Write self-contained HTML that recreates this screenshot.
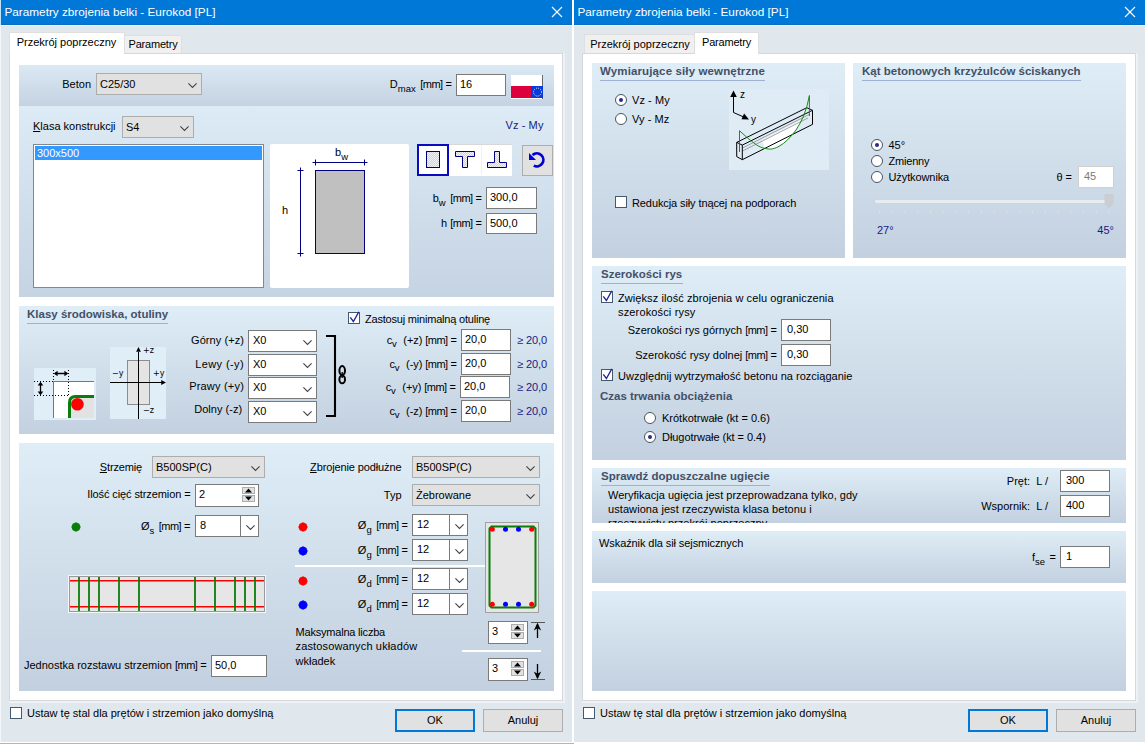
<!DOCTYPE html><html><head><meta charset="utf-8"><title>Parametry zbrojenia belki - Eurokod [PL]</title><style>
html,body{margin:0;padding:0;background:#fff}
body{width:1145px;height:744px;position:relative;overflow:hidden;font:11px "Liberation Sans",sans-serif;color:#000}
.dlg{position:absolute;top:0;width:572px;height:742px;background:#e1e8ed;overflow:hidden}
.a,.dlg *{position:absolute;box-sizing:border-box}
.tb{left:0;top:0;width:572px;height:25px;background:#0078d7}
.tt{left:4.5px;top:4px;color:#fff;font-size:11.75px;line-height:16px;white-space:nowrap}
.page{left:9px;top:53px;width:554px;height:648px;background:#fff;border:1px solid #d4d8dc;box-shadow:1px 1px 0 1px #eef2f5}
.tab{white-space:nowrap;text-align:center;border:1px solid #dfdfdf;border-bottom:none;line-height:14px}
.tab.on{background:#fff;z-index:3}
.tab.off{background:#f0f0f0;z-index:1}
.pn{background:linear-gradient(#deedf6,#c3d0e0)}
.l{white-space:nowrap;line-height:14px;height:14px}
.r{text-align:right}
.h{white-space:nowrap;line-height:14px;height:14px;font-weight:bold;font-size:11.5px;color:#435068}
.hl{height:1px;background:#9fb1d2}
.in{background:#fff;border:1px solid #7a7a7a;line-height:19px;padding-left:3px;white-space:nowrap}
.cb{background:#e1e1e1;border:1px solid #adadad;line-height:21px;padding-left:3px;white-space:nowrap}
.cw{background:#fff;border:1px solid #7a7a7a;line-height:18.500px;padding-left:4px;white-space:nowrap}
.chk{width:12px;height:12px;background:#fff;border:1px solid #44586e}
.rad{width:12px;height:12px;border-radius:50%;background:#fff;border:1px solid #4a5462}
.btn{background:#e1e1e1;border:1px solid #adadad;text-align:center;line-height:20px}
.nv{color:#1a1a80}
svg{overflow:visible}
u,sub{position:static!important}
sub{font-size:9.500px;vertical-align:-3.500px;line-height:0;margin-right:1.500px}
.mm{position:static!important;letter-spacing:-0.550px}
</style></head><body>
<div class="dlg" style="left:0px">
<div class="tb"></div><div class="tt">Parametry zbrojenia belki - Eurokod [PL]</div>
<div style="left:0;top:24px;width:572px;height:1px;background:#0a6fc4"></div><div style="left:0;top:25px;width:572px;height:1px;background:#e9f4fb"></div>
<div style="left:0;top:0;width:1px;height:742px;background:#f3f7fa;z-index:5"></div>
<div style="left:0;top:0;width:1px;height:25px;background:#bfe3fb;z-index:6"></div>
<svg style="left:552px;top:7px" width="10" height="10" viewBox="0 0 10 10"><path d="M0 0 L10 10 M10 0 L0 10" stroke="#fff" stroke-width="1.1"/></svg>
<div class="page"></div>
<div class="tab on" style="left:9px;top:32px;width:116px;height:22px;padding-top:2px;text-indent:-1px">Przekrój poprzeczny</div>
<div class="tab off" style="left:124px;top:34.500px;width:58px;height:18.500px;padding-top:1px;letter-spacing:-0.2px">Parametry</div>
<div class="pn" style="left:19px;top:65px;width:535px;height:41px;background:linear-gradient(#dbe9f4,#c4d2e2);"></div>
<div class="pn" style="left:19px;top:106px;width:535px;height:191px;background:linear-gradient(#dcebf5,#c5d3e3);"></div>
<div class="pn" style="left:19px;top:306px;width:535px;height:128px;"></div>
<div class="pn" style="left:19px;top:443px;width:535px;height:248px;"></div>
<div class="l r" style="right:481px;top:77px;">Beton</div>
<div class="cb" style="left:96px;top:73px;width:106px;height:22px">C25/30</div>
<svg style="left:188.0px;top:82.5px" width="9" height="5" viewBox="0 0 9 5"><path d="M0.4 0.4 L4.5 4.5 L8.6 0.4" fill="none" stroke="#444" stroke-width="1.1"/></svg>
<div class="l r" style="right:120px;top:77px;">D<sub>max</sub> <span class="mm">[mm]</span> =</div>
<div class="in" style="left:456px;top:74px;width:50px;height:22px;">16</div>
<div style="left:511px;top:75px;width:32px;height:23.500px;background:#fff;border-right:1px solid #666"></div>
<div style="left:511px;top:86.300px;width:32px;height:12.200px;background:#dc003c"></div>
<div style="left:531px;top:86.300px;width:12px;height:12.200px;background:#0a3ad8"></div>
<svg style="left:531px;top:86.300px" width="12" height="12" viewBox="0 0 12 12"><circle cx="6.500" cy="6.100" r="4" fill="none" stroke="#e8f0ff" stroke-width="1" stroke-dasharray="1 1.1"/></svg>
<div class="l" style="left:33px;top:119px;"><u>K</u>lasa konstrukcji</div>
<div class="cb" style="left:122px;top:116px;width:72px;height:22px">S4</div>
<svg style="left:180.0px;top:125.5px" width="9" height="5" viewBox="0 0 9 5"><path d="M0.4 0.4 L4.5 4.5 L8.6 0.4" fill="none" stroke="#444" stroke-width="1.1"/></svg>
<div class="l nv" style="left:505.5px;top:118px;letter-spacing:0.1px">Vz - My</div>
<div style="left:33px;top:144px;width:231px;height:144px;background:#fff;border:1px solid #828790"></div>
<div style="left:35px;top:146px;width:227px;height:14px;background:#3399ff;color:#fff;line-height:14px;padding-left:2px">300x500</div>
<div style="left:270px;top:144px;width:139px;height:144px;background:#fff;border-radius:2px"></div>
<svg style="left:270px;top:144px" width="139" height="144" viewBox="270 144 139 144">
<rect x="315.5" y="170.5" width="49" height="83" fill="#c0c0c0" stroke="#000080" stroke-width="1"/>
<path d="M312.5 162.5 H367.5 M315.5 159.5 V165.5 M364.5 159.5 V165.5 M300.5 167.5 V256.5 M297.5 170.5 H303.5 M297.5 253.5 H303.5" stroke="#000080" stroke-width="1" fill="none"/>
</svg>
<div class="l" style="left:335px;top:145px;">b<sub>w</sub></div>
<div class="l" style="left:282px;top:203px;">h</div>
<div style="left:417px;top:144px;width:95px;height:32px;background:#fff"></div>
<div style="left:417px;top:144px;width:32px;height:32px;border:2.500px solid #0a0ac0"></div>
<svg style="left:417px;top:144px" width="95" height="32" viewBox="0 0 95 32">
<defs><pattern id="dp" width="2" height="2" patternUnits="userSpaceOnUse"><rect width="2" height="2" fill="#f4f4f8"/><rect width="1" height="1" fill="#d0d0d8"/><rect x="1" y="1" width="1" height="1" fill="#d0d0d8"/></pattern></defs>
<rect x="9.500" y="7.500" width="13" height="16" fill="url(#dp)" stroke="#000080" stroke-width="1"/>
<path d="M38.500 7.500 H57.500 V12.500 H50.500 V23.500 H45.500 V12.500 H38.500 Z" fill="url(#dp)" stroke="#000080" stroke-width="1"/>
<path d="M70.500 23.500 H89.500 V18.500 H82.500 V7.500 H77.500 V18.500 H70.500 Z" fill="url(#dp)" stroke="#000080" stroke-width="1"/>
<path d="M32 0.500 H95" stroke="#d8d8d8" stroke-width="1" fill="none"/><path d="M64.500 1 V31" stroke="#f1f1f1" stroke-width="1" fill="none"/>
</svg>
<div class="btn" style="left:522px;top:145px;width:31px;height:31px"></div>
<svg style="left:522px;top:145px" width="32" height="31" viewBox="0 0 32 31">
<path d="M10.50 10.07 A6.500 6.500 0 1 1 11.80 20.64" fill="none" stroke="#0000d2" stroke-width="2.700"/>
<path d="M7 8 V15 H14 Z" fill="#0000e0"/></svg>
<div class="l r" style="right:90px;top:191px;">b<sub>w</sub> <span class="mm">[mm]</span> =</div>
<div class="in" style="left:486px;top:187px;width:51px;height:22px;">300,0</div>
<div class="l r" style="right:90px;top:216px;">h <span class="mm">[mm]</span> =</div>
<div class="in" style="left:486px;top:213px;width:51px;height:21px;">500,0</div>
<div class="h" style="left:27px;top:307px">Klasy środowiska, otuliny</div>
<div class="hl" style="left:27px;top:323px;width:141px"></div>
<div class="l r" style="right:328px;top:333.2px;letter-spacing:0.07px">Górny (+z)</div>
<div class="cw" style="left:248px;top:330px;width:69px;height:22px">X0</div>
<svg style="left:303.0px;top:339.5px" width="9" height="5" viewBox="0 0 9 5"><path d="M0.4 0.4 L4.5 4.5 L8.6 0.4" fill="none" stroke="#444" stroke-width="1.1"/></svg>
<div class="l r" style="right:328px;top:356.5px;letter-spacing:0.4px">Lewy (-y)</div>
<div class="cw" style="left:248px;top:353.5px;width:69px;height:22px">X0</div>
<svg style="left:303.0px;top:363.0px" width="9" height="5" viewBox="0 0 9 5"><path d="M0.4 0.4 L4.5 4.5 L8.6 0.4" fill="none" stroke="#444" stroke-width="1.1"/></svg>
<div class="l r" style="right:328px;top:379px;letter-spacing:0.2px">Prawy (+y)</div>
<div class="cw" style="left:248px;top:377px;width:69px;height:22px">X0</div>
<svg style="left:303.0px;top:386.5px" width="9" height="5" viewBox="0 0 9 5"><path d="M0.4 0.4 L4.5 4.5 L8.6 0.4" fill="none" stroke="#444" stroke-width="1.1"/></svg>
<div class="l r" style="right:329.8px;top:402.2px;letter-spacing:0.03px">Dolny (-z)</div>
<div class="cw" style="left:248px;top:401px;width:69px;height:22px">X0</div>
<svg style="left:303.0px;top:410.5px" width="9" height="5" viewBox="0 0 9 5"><path d="M0.4 0.4 L4.5 4.5 L8.6 0.4" fill="none" stroke="#444" stroke-width="1.1"/></svg>
<div class="chk" style="left:348px;top:312px"></div>
<svg style="left:348px;top:310px" width="14" height="15" viewBox="0 0 14 15"><path d="M2.300 7.300 L5.400 11.500 L10.800 1.800" fill="none" stroke="#26269a" stroke-width="1.35"/></svg>
<div class="l" style="left:365px;top:312px;letter-spacing:-0.2px">Zastosuj minimalną otulinę</div>
<div class="l r" style="right:115px;top:332.5px;letter-spacing:-0.05px">c<sub style="margin-right:3.500px">v</sub> (+z) <span class="mm">[mm]</span> =</div>
<div class="in" style="left:461px;top:329px;width:50px;height:22px;">20,0</div>
<div class="l nv" style="left:517px;top:332.5px;letter-spacing:-0.1px">≥ 20,0</div>
<div class="l r" style="right:115px;top:356.5px;letter-spacing:-0.05px">c<sub style="margin-right:3.500px">v</sub> (-y) <span class="mm">[mm]</span> =</div>
<div class="in" style="left:461px;top:353px;width:50px;height:22px;">20,0</div>
<div class="l nv" style="left:517px;top:356.5px;letter-spacing:-0.1px">≥ 20,0</div>
<div class="l r" style="right:116px;top:379.5px;letter-spacing:-0.05px">c<sub style="margin-right:3.500px">v</sub> (+y) <span class="mm">[mm]</span> =</div>
<div class="in" style="left:460px;top:376px;width:50px;height:22px;">20,0</div>
<div class="l nv" style="left:517px;top:379.5px;letter-spacing:-0.1px">≥ 20,0</div>
<div class="l r" style="right:115px;top:403.5px;letter-spacing:-0.05px">c<sub style="margin-right:3.500px">v</sub> (-z) <span class="mm">[mm]</span> =</div>
<div class="in" style="left:461px;top:400px;width:50px;height:22px;">20,0</div>
<div class="l nv" style="left:517px;top:403.5px;letter-spacing:-0.1px">≥ 20,0</div>
<svg style="left:326px;top:335px" width="22" height="82" viewBox="326 335 22 82"><path d="M326 336 H335 V416 H326" fill="none" stroke="#000" stroke-width="2.100"/><ellipse cx="342.200" cy="370.600" rx="2.800" ry="4.500" fill="none" stroke="#000" stroke-width="2"/><ellipse cx="342.200" cy="379.400" rx="2.800" ry="3.900" fill="none" stroke="#000" stroke-width="2"/><path d="M342.200 372 V378" stroke="#000" stroke-width="1.300"/></svg>
<svg style="left:34px;top:368px" width="62" height="52" viewBox="34 368 62 52">
<rect x="34" y="368" width="62" height="52" fill="#e0eef8"/>
<rect x="53.500" y="381.500" width="40.500" height="36.500" fill="#fff"/>
<rect x="70" y="397" width="24" height="21" fill="#e2e2e2"/>
<path d="M53.500 418 V381.500 H94" fill="none" stroke="#777" stroke-width="1"/>
<path d="M69.500 418 V402.500 Q69.500 396.500 75.500 396.500 H94" fill="none" stroke="#0a7d0a" stroke-width="3"/>
<circle cx="77.400" cy="404.300" r="6.300" fill="#ff0000"/>
<path d="M34 381.500 H54 M34 395.500 H69 M53.500 370 V381 M68.500 370 V396" stroke="#000" stroke-width="1" stroke-dasharray="1 2" fill="none"/>
<path d="M55 373.500 H67 M40.500 383 V394" stroke="#000" stroke-width="1.300"/>
<path d="M53.800 373.500 l3.800 -2.800 v5.600z M68.200 373.500 l-3.800 -2.800 v5.600z M40.500 381.800 l-2.800 3.800 h5.600z M40.500 395.200 l-2.800 -3.800 h5.600z" fill="#000"/>
</svg>
<svg style="left:110px;top:347px" width="56" height="72" viewBox="110 347 56 72">
<rect x="110" y="347" width="56" height="72" fill="#e0eef8"/>
<rect x="127.500" y="360.500" width="22" height="44" fill="#e4e4e4" stroke="#8c8c8c"/>
<path d="M138.500 352 V419 M110 382.500 H163" stroke="#000" stroke-width="1"/>
<path d="M138.500 347 l-2.400 4.800 h4.800z M166 382.500 l-4.800 -2.400 v4.800z" fill="#000"/>
</svg>
<div class="l" style="left:143px;top:343.5px;font:8px/14px DejaVu Sans,sans-serif">+z</div>
<div class="l" style="left:112px;top:366.5px;font:8px/14px DejaVu Sans,sans-serif">−y</div>
<div class="l" style="left:153px;top:366.5px;font:8px/14px DejaVu Sans,sans-serif">+y</div>
<div class="l" style="left:143px;top:404px;font:8px/14px DejaVu Sans,sans-serif">−z</div>
<div class="l r" style="right:430px;top:460px;letter-spacing:-0.15px"><u>S</u>trzemię</div>
<div class="cb" style="left:152px;top:456px;width:113px;height:22px">B500SP(C)</div>
<svg style="left:251.0px;top:465.5px" width="9" height="5" viewBox="0 0 9 5"><path d="M0.4 0.4 L4.5 4.5 L8.6 0.4" fill="none" stroke="#444" stroke-width="1.1"/></svg>
<div class="l r" style="right:381.5px;top:487px;letter-spacing:-0.1px">Ilość cięć strzemion =</div>
<div class="in" style="left:195px;top:484px;width:64px;height:23px;">2</div>
<div style="left:242px;top:487px;width:13px;height:7px;background:#e1e1e1;border:1px solid #adadad"></div>
<div style="left:242px;top:495px;width:13px;height:7px;background:#e1e1e1;border:1px solid #adadad"></div>
<svg style="left:242px;top:487px" width="13" height="15" viewBox="0 0 13 15"><path d="M3 5.5 L6.5 1.5 L10 5.5Z M3 9.5 L6.5 13.5 L10 9.5Z" fill="#000"/></svg>
<svg style="left:70.500px;top:521.700px" width="10" height="10"><path d="M5 0.300 L8.300 1.700 L9.700 5 L8.300 8.300 L5 9.700 L1.700 8.300 L0.300 5 L1.700 1.700Z" fill="#0a7d0a"/></svg>
<div class="l r" style="right:381.5px;top:519px;">Ø<sub>s</sub> <span class="mm">[mm]</span> =</div>
<div class="cw" style="left:195px;top:515px;width:64px;height:22px">8</div>
<div style="left:240px;top:516px;width:1px;height:20px;background:#7a7a7a"></div>
<svg style="left:245.5px;top:525.0px" width="9" height="5" viewBox="0 0 9 5"><path d="M0.4 0.4 L4.5 4.5 L8.6 0.4" fill="none" stroke="#444" stroke-width="1.1"/></svg>
<svg style="left:68px;top:575px" width="198" height="38" viewBox="68 575 198 38"><rect x="68.500" y="575.500" width="197" height="37" fill="#f4f8fb" stroke="#f4f8fb"/><rect x="69.500" y="576.500" width="195" height="35" fill="#e6e6e6" stroke="#9a9a9a"/><path d="M70 580.700 H264 M70 606.700 H264" stroke="#f00" stroke-width="1.6"/><path d="M79 577 V611" stroke="#0a7d0a" stroke-width="1.8"/><path d="M89 577 V611" stroke="#0a7d0a" stroke-width="1.8"/><path d="M99 577 V611" stroke="#0a7d0a" stroke-width="1.8"/><path d="M119 577 V611" stroke="#0a7d0a" stroke-width="1.8"/><path d="M139 577 V611" stroke="#0a7d0a" stroke-width="1.8"/><path d="M195 577 V611" stroke="#0a7d0a" stroke-width="1.8"/><path d="M215 577 V611" stroke="#0a7d0a" stroke-width="1.8"/><path d="M235 577 V611" stroke="#0a7d0a" stroke-width="1.8"/><path d="M245 577 V611" stroke="#0a7d0a" stroke-width="1.8"/><path d="M255 577 V611" stroke="#0a7d0a" stroke-width="1.8"/></svg>
<div class="l" style="left:24px;top:658px;">Jednostka rozstawu strzemion <span class="mm">[mm]</span> =</div>
<div class="in" style="left:211px;top:655px;width:56px;height:22px;">50,0</div>
<div class="l r" style="right:170.5px;top:460px;letter-spacing:-0.12px"><u>Z</u>brojenie podłużne</div>
<div class="cb" style="left:412px;top:456px;width:128px;height:22px">B500SP(C)</div>
<svg style="left:526.0px;top:465.5px" width="9" height="5" viewBox="0 0 9 5"><path d="M0.4 0.4 L4.5 4.5 L8.6 0.4" fill="none" stroke="#444" stroke-width="1.1"/></svg>
<div class="l r" style="right:170.5px;top:488px;">Typ</div>
<div class="cb" style="left:412px;top:484px;width:128px;height:22px">Żebrowane</div>
<svg style="left:526.0px;top:493.5px" width="9" height="5" viewBox="0 0 9 5"><path d="M0.4 0.4 L4.5 4.5 L8.6 0.4" fill="none" stroke="#444" stroke-width="1.1"/></svg>
<svg style="left:298px;top:521.7px" width="10" height="10"><path d="M5 0.300 L8.300 1.700 L9.700 5 L8.300 8.300 L5 9.700 L1.700 8.300 L0.300 5 L1.700 1.700Z" fill="#f00"/></svg>
<div class="l r" style="right:164px;top:518px;">Ø<sub>g</sub> <span class="mm">[mm]</span> =</div>
<div class="cw" style="left:412px;top:514px;width:56px;height:22px">12</div>
<div style="left:449px;top:515px;width:1px;height:20px;background:#7a7a7a"></div>
<svg style="left:454.5px;top:524.0px" width="9" height="5" viewBox="0 0 9 5"><path d="M0.4 0.4 L4.5 4.5 L8.6 0.4" fill="none" stroke="#444" stroke-width="1.1"/></svg>
<svg style="left:298px;top:546.2px" width="10" height="10"><path d="M5 0.300 L8.300 1.700 L9.700 5 L8.300 8.300 L5 9.700 L1.700 8.300 L0.300 5 L1.700 1.700Z" fill="#00f"/></svg>
<div class="l r" style="right:164px;top:543px;">Ø<sub>g</sub> <span class="mm">[mm]</span> =</div>
<div class="cw" style="left:412px;top:539px;width:56px;height:22px">12</div>
<div style="left:449px;top:540px;width:1px;height:20px;background:#7a7a7a"></div>
<svg style="left:454.5px;top:549.0px" width="9" height="5" viewBox="0 0 9 5"><path d="M0.4 0.4 L4.5 4.5 L8.6 0.4" fill="none" stroke="#444" stroke-width="1.1"/></svg>
<svg style="left:298px;top:575.5px" width="10" height="10"><path d="M5 0.300 L8.300 1.700 L9.700 5 L8.300 8.300 L5 9.700 L1.700 8.300 L0.300 5 L1.700 1.700Z" fill="#f00"/></svg>
<div class="l r" style="right:164px;top:572px;">Ø<sub>d</sub> <span class="mm">[mm]</span> =</div>
<div class="cw" style="left:412px;top:568px;width:56px;height:22px">12</div>
<div style="left:449px;top:569px;width:1px;height:20px;background:#7a7a7a"></div>
<svg style="left:454.5px;top:578.0px" width="9" height="5" viewBox="0 0 9 5"><path d="M0.4 0.4 L4.5 4.5 L8.6 0.4" fill="none" stroke="#444" stroke-width="1.1"/></svg>
<svg style="left:298px;top:600px" width="10" height="10"><path d="M5 0.300 L8.300 1.700 L9.700 5 L8.300 8.300 L5 9.700 L1.700 8.300 L0.300 5 L1.700 1.700Z" fill="#00f"/></svg>
<div class="l r" style="right:164px;top:597px;">Ø<sub>d</sub> <span class="mm">[mm]</span> =</div>
<div class="cw" style="left:412px;top:593px;width:56px;height:22px">12</div>
<div style="left:449px;top:594px;width:1px;height:20px;background:#7a7a7a"></div>
<svg style="left:454.5px;top:603.0px" width="9" height="5" viewBox="0 0 9 5"><path d="M0.4 0.4 L4.5 4.5 L8.6 0.4" fill="none" stroke="#444" stroke-width="1.1"/></svg>
<div style="left:295px;top:565px;width:190px;height:2px;background:#fff"></div>
<svg style="left:485px;top:522px" width="54" height="91" viewBox="485 522 54 91"><rect x="485.500" y="522.500" width="53" height="90" fill="#e6e6e6" stroke="#a0a0a0"/><path d="M491.500 526.500 H533.500 L535.500 528.500 V605.500 L533.500 607.500 H491.500 L489.500 605.500 V528.500 Z" fill="none" stroke="#0a7d0a" stroke-width="2"/><circle cx="492.3" cy="529.3" r="2.500" fill="#f00"/><circle cx="505.5" cy="529.3" r="2.500" fill="#00f"/><circle cx="518.5" cy="529.3" r="2.500" fill="#00f"/><circle cx="531.7" cy="529.3" r="2.500" fill="#f00"/><circle cx="492.3" cy="604.3" r="2.500" fill="#f00"/><circle cx="505.5" cy="604.3" r="2.500" fill="#00f"/><circle cx="518.5" cy="604.3" r="2.500" fill="#00f"/><circle cx="531.7" cy="604.3" r="2.500" fill="#f00"/></svg>
<div class="l" style="left:295.5px;top:625px;letter-spacing:-0.2px">Maksymalna liczba</div>
<div class="l" style="left:295.5px;top:639px;letter-spacing:0.15px">zastosowanych układów</div>
<div class="l" style="left:295.5px;top:653.5px;">wkładek</div>
<div class="in" style="left:488px;top:621px;width:40px;height:23px;">3</div>
<div style="left:511px;top:624px;width:13px;height:7px;background:#e1e1e1;border:1px solid #adadad"></div>
<div style="left:511px;top:632px;width:13px;height:7px;background:#e1e1e1;border:1px solid #adadad"></div>
<svg style="left:511px;top:624px" width="13" height="15" viewBox="0 0 13 15"><path d="M3 5.5 L6.5 1.5 L10 5.5Z M3 9.5 L6.5 13.5 L10 9.5Z" fill="#000"/></svg>
<div class="in" style="left:488px;top:658px;width:40px;height:23px;">3</div>
<div style="left:511px;top:661px;width:13px;height:7px;background:#e1e1e1;border:1px solid #adadad"></div>
<div style="left:511px;top:669px;width:13px;height:7px;background:#e1e1e1;border:1px solid #adadad"></div>
<svg style="left:511px;top:661px" width="13" height="15" viewBox="0 0 13 15"><path d="M3 5.5 L6.5 1.5 L10 5.5Z M3 9.5 L6.5 13.5 L10 9.5Z" fill="#000"/></svg>
<div style="left:462px;top:650px;width:79px;height:2px;background:#fff"></div>
<svg style="left:530px;top:620px" width="16" height="62" viewBox="530 620 16 62"><path d="M531 622.500 H545 M531 679.500 H545" stroke="#555" stroke-width="1" fill="none"/><path d="M537.500 624 V638 M537.500 664 V678" stroke="#000" stroke-width="1.300" fill="none"/><path d="M537.500 622.700 L533.800 630.500 L537.500 628.300 L541.200 630.500Z M537.500 679.300 L533.800 671.500 L537.500 673.700 L541.200 671.500Z" fill="#000"/></svg>
<div class="chk" style="left:10px;top:707px"></div>
<div class="l" style="left:27px;top:706px;">Ustaw tę stal dla prętów i strzemion jako domyślną</div>
<div class="btn" style="left:395px;top:709px;width:80px;height:23px;border:2px solid #0078d7;line-height:18px">OK</div>
<div class="btn" style="left:483px;top:709px;width:80px;height:23px">Anuluj</div>
</div>
<div class="dlg" style="left:573px">
<div class="tb"></div><div class="tt">Parametry zbrojenia belki - Eurokod [PL]</div>
<div style="left:0;top:24px;width:572px;height:1px;background:#0a6fc4"></div><div style="left:0;top:25px;width:572px;height:1px;background:#e9f4fb"></div>
<div style="left:0;top:0;width:1px;height:742px;background:#fff;z-index:5"></div>
<svg style="left:552px;top:7px" width="10" height="10" viewBox="0 0 10 10"><path d="M0 0 L10 10 M10 0 L0 10" stroke="#fff" stroke-width="1.1"/></svg>
<div class="page"></div>
<div class="tab off" style="left:11px;top:34px;width:112px;height:19px;padding-top:2px">Przekrój poprzeczny</div>
<div class="tab on" style="left:121px;top:32px;width:65px;height:22px;padding-top:2px;letter-spacing:-0.2px">Parametry</div>
<div class="pn" style="left:19px;top:63px;width:253px;height:195px;"></div>
<div class="pn" style="left:280px;top:63px;width:273px;height:195px;"></div>
<div class="pn" style="left:19px;top:266px;width:534px;height:194px;"></div>
<div class="pn" style="left:19px;top:468px;width:534px;height:55px;"></div>
<div class="pn" style="left:19px;top:531px;width:534px;height:52px;"></div>
<div class="pn" style="left:19px;top:591px;width:534px;height:100px;"></div>
<div class="h" style="left:27px;top:64px"><span style="position:static;letter-spacing:0.13px">Wymiarujące siły wewnętrzne</span></div>
<div class="hl" style="left:27px;top:80px;width:165px"></div>
<div class="rad" style="left:42px;top:94px"></div>
<div style="left:46px;top:98px;width:4px;height:4px;border-radius:50%;background:#2a2a8a"></div>
<div class="l" style="left:59px;top:93px;letter-spacing:0.07px">Vz - My</div>
<div class="rad" style="left:42px;top:113px"></div>
<div class="l" style="left:59px;top:112px;letter-spacing:0.07px">Vy - Mz</div>
<div class="chk" style="left:42px;top:196px"></div>
<div class="l" style="left:59px;top:195.5px;letter-spacing:-0.1px">Redukcja siły tnącej na podporach</div>
<svg style="left:156px;top:89px" width="100" height="81" viewBox="729 89 100 81">
<rect x="729" y="89" width="100" height="81" fill="#dfecf6"/>
<path d="M762 140 L801.500 120 L796 130 L787.500 139.900 L779 146.300 L770.500 149.100 L764.900 148.400 Z" fill="#fff"/>
<path d="M742.500 148 L810 114 M742.500 151 L808 118" stroke="#8a8a8a" stroke-width="0.800" fill="none"/>
<path d="M736.700 142.400 V156.600 L742.300 159.700 V145.100 Z M736.700 142.400 L806.800 107.700 L812.500 110.300 M742.300 145.100 L812.500 110.300 V124.400 L742.300 159.700" stroke="#000" stroke-width="1" fill="none"/>
<path d="M739.500 152 V130.700 L746.600 137.100 C750 140 753 142.500 756.400 144.800 C759 146.600 762 147.800 764.900 148.400 C767 148.900 769 149.200 770.500 149.100 C773 149 776 148 779 146.300 C782 144.600 785 142.500 787.500 139.900 C790.500 137 793.500 133.500 796 130 C798.500 126 801 122 803 117.300 C804.500 113.500 806 109.500 807.200 105.300 L809.400 95.500 V116" stroke="#1a8a1a" stroke-width="1" fill="none"/>
<path d="M733.500 112.500 V94 M733.500 112.500 L746 118" stroke="#000" stroke-width="1" fill="none"/>
<path d="M733.500 90.500 l-3.300 6.500 h6.600z M749 119.500 l-7.500 -0.200 l2.600 -5.800z" fill="#000"/>
<text x="740" y="98" font-family="Liberation Sans, sans-serif" font-size="10">z</text>
<text x="751" y="123" font-family="Liberation Sans, sans-serif" font-size="10">y</text>
</svg>
<div class="h" style="left:289px;top:64px">Kąt betonowych krzyżulców ściskanych</div>
<div class="hl" style="left:289px;top:80px;width:219px"></div>
<div class="rad" style="left:298px;top:138.5px"></div>
<div style="left:302px;top:142.5px;width:4px;height:4px;border-radius:50%;background:#2a2a8a"></div>
<div class="l" style="left:315.5px;top:137.5px;">45°</div>
<div class="rad" style="left:298px;top:155px"></div>
<div class="l" style="left:315.5px;top:154px;letter-spacing:-0.2px">Zmienny</div>
<div class="rad" style="left:298px;top:171px"></div>
<div class="l" style="left:315.5px;top:170px;letter-spacing:-0.1px">Użytkownika</div>
<div class="l r" style="right:73px;top:169.5px;">θ =</div>
<div class="in" style="left:505px;top:166px;width:36px;height:22px;border-color:#d0d0d0;color:#7a7a7a;padding-left:5px">45</div>
<div style="left:302px;top:200px;width:231px;height:3px;background:#e8ecee;border-radius:1px"></div>
<svg style="left:531px;top:193px" width="10" height="16" viewBox="0 0 10 16"><path d="M0.500 1 H9.500 V11 L5 15.500 L0.500 11 Z" fill="#c9ced3"/></svg>
<svg style="left:300px;top:210px" width="240" height="4" viewBox="873 210 240 4"><path d="M879.50 210 V214" stroke="#d6dee6" stroke-width="1"/><path d="M892.25 210 V214" stroke="#d6dee6" stroke-width="1"/><path d="M905.00 210 V214" stroke="#d6dee6" stroke-width="1"/><path d="M917.75 210 V214" stroke="#d6dee6" stroke-width="1"/><path d="M930.50 210 V214" stroke="#d6dee6" stroke-width="1"/><path d="M943.25 210 V214" stroke="#d6dee6" stroke-width="1"/><path d="M956.00 210 V214" stroke="#d6dee6" stroke-width="1"/><path d="M968.75 210 V214" stroke="#d6dee6" stroke-width="1"/><path d="M981.50 210 V214" stroke="#d6dee6" stroke-width="1"/><path d="M994.25 210 V214" stroke="#d6dee6" stroke-width="1"/><path d="M1007.00 210 V214" stroke="#d6dee6" stroke-width="1"/><path d="M1019.75 210 V214" stroke="#d6dee6" stroke-width="1"/><path d="M1032.50 210 V214" stroke="#d6dee6" stroke-width="1"/><path d="M1045.25 210 V214" stroke="#d6dee6" stroke-width="1"/><path d="M1058.00 210 V214" stroke="#d6dee6" stroke-width="1"/><path d="M1070.75 210 V214" stroke="#d6dee6" stroke-width="1"/><path d="M1083.50 210 V214" stroke="#d6dee6" stroke-width="1"/><path d="M1096.25 210 V214" stroke="#d6dee6" stroke-width="1"/><path d="M1109.00 210 V214" stroke="#d6dee6" stroke-width="1"/></svg>
<div class="l nv" style="left:304px;top:222.5px;">27°</div>
<div class="l r" style="right:31px;top:222.5px;color:#1a1a80">45°</div>
<div class="h" style="left:28px;top:267px">Szerokości rys</div>
<div class="hl" style="left:28px;top:283px;width:81.5px"></div>
<div class="chk" style="left:28px;top:291px"></div>
<svg style="left:28px;top:289px" width="14" height="15" viewBox="0 0 14 15"><path d="M2.300 7.300 L5.400 11.500 L10.800 1.800" fill="none" stroke="#26269a" stroke-width="1.35"/></svg>
<div class="l" style="left:45px;top:290.5px;letter-spacing:0.08px">Zwiększ ilość zbrojenia w celu ograniczenia</div>
<div class="l" style="left:45px;top:304.7px;letter-spacing:0.15px">szerokości rysy</div>
<div class="l r" style="right:368px;top:323px;letter-spacing:0.03px">Szerokości rys górnych <span class="mm">[mm]</span> =</div>
<div class="in" style="left:208px;top:319px;width:50px;height:22px;padding-left:5px">0,30</div>
<div class="l r" style="right:368px;top:347.5px;">Szerokość rysy dolnej <span class="mm">[mm]</span> =</div>
<div class="in" style="left:208px;top:344px;width:50px;height:22px;padding-left:5px">0,30</div>
<div class="chk" style="left:28px;top:369px"></div>
<svg style="left:28px;top:367px" width="14" height="15" viewBox="0 0 14 15"><path d="M2.300 7.300 L5.400 11.500 L10.800 1.800" fill="none" stroke="#26269a" stroke-width="1.35"/></svg>
<div class="l" style="left:45px;top:368.5px;letter-spacing:0.02px">Uwzględnij wytrzymałość betonu na rozciąganie</div>
<div class="h" style="left:27px;top:389px">Czas trwania obciążenia</div>
<div class="rad" style="left:71px;top:412px"></div>
<div class="l" style="left:89px;top:411px;">Krótkotrwałe (kt = 0.6)</div>
<div class="rad" style="left:71px;top:431px"></div>
<div style="left:75px;top:435px;width:4px;height:4px;border-radius:50%;background:#2a2a8a"></div>
<div class="l" style="left:89px;top:430px;letter-spacing:-0.05px">Długotrwałe (kt = 0.4)</div>
<div class="h" style="left:28px;top:469px">Sprawdź dopuszczalne ugięcie</div>
<div class="hl" style="left:28px;top:485px;width:169px"></div>
<div style="left:35px;top:488px;width:300px;height:34.500px;overflow:hidden"><div class="l" style="left:0;top:-0.500px;letter-spacing:0.02px">Weryfikacja ugięcia jest przeprowadzana tylko, gdy</div><div class="l" style="left:0;top:13.500px;letter-spacing:0.08px">ustawiona jest rzeczywista klasa betonu i</div><div class="l" style="left:0;top:27.500px;letter-spacing:0.05px">rzeczywisty przekrój poprzeczny</div></div>
<div class="l r" style="right:97px;top:473.5px;">Pręt:&nbsp; L /</div>
<div class="in" style="left:487px;top:470px;width:50px;height:22px;padding-left:5px">300</div>
<div class="l r" style="right:97px;top:498.5px;">Wspornik:&nbsp; L /</div>
<div class="in" style="left:487px;top:495px;width:50px;height:22px;padding-left:5px">400</div>
<div class="l" style="left:26px;top:536px;letter-spacing:-0.085px">Wskaźnik dla sił sejsmicznych</div>
<div class="l r" style="right:89px;top:550px;">f<sub>se</sub> =</div>
<div class="in" style="left:487px;top:546px;width:50px;height:22px;padding-left:5px">1</div>
<div class="chk" style="left:10px;top:707px"></div>
<div class="l" style="left:27px;top:706px;">Ustaw tę stal dla prętów i strzemion jako domyślną</div>
<div class="btn" style="left:395px;top:709px;width:80px;height:23px;border:2px solid #0078d7;line-height:18px">OK</div>
<div class="btn" style="left:483px;top:709px;width:80px;height:23px">Anuluj</div>
</div>
<div class="a" style="left:0;top:743px;width:574px;height:1px;background:#b4b4b4"></div>
</body></html>
